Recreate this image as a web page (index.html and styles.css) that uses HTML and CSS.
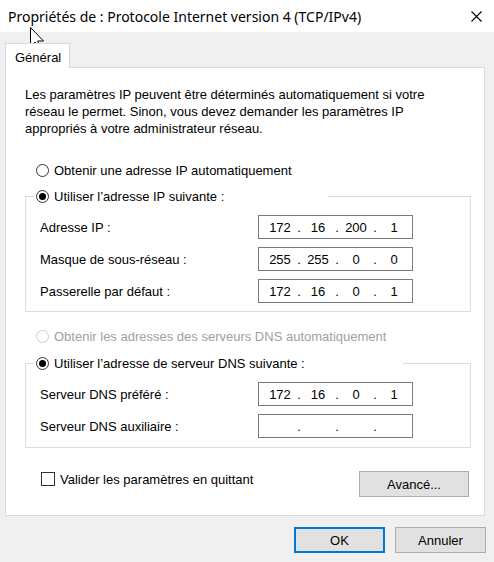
FILE: index.html
```html
<!DOCTYPE html>
<html>
<head>
    <meta charset="utf-8">
    <title>Propriétés de : Protocole Internet version 4 (TCP/IPv4)</title>
    <link rel="stylesheet" href="styles.css">
</head>
<body>
    <div class="titlebar">
        <span class="title">Propriétés de : Protocole Internet version 4 (TCP/IPv4)</span>
        <svg class="close" width="11" height="11" viewBox="0 0 11 11">
            <path d="M0.5 0.5 L10.5 10.5 M10.5 0.5 L0.5 10.5" stroke="#000" stroke-width="1.1" fill="none"/>
        </svg>
    </div>

    <div class="window">
        <div class="tabs">
            <div class="tab">Général</div>
        </div>

        <div class="panel">
            <p class="intro">
                Les paramètres IP peuvent être déterminés automatiquement si votre<br>
                réseau le permet. Sinon, vous devez demander les paramètres IP<br>
                appropriés à votre administrateur réseau.
            </p>

            <div class="option option-top">
                <span class="radio"></span>
                <span>Obtenir une adresse IP automatiquement</span>
            </div>

            <div class="group group-ip">
                <div class="legend legend-ip">
                    <span class="radio checked"></span>
                    <span>Utiliser l’adresse IP suivante :</span>
                </div>
                <div class="field first">
                    <label>Adresse IP :</label>
                    <div class="ip-box">
                        <span class="seg">172</span><span class="dot">.</span><span class="seg">16</span><span class="dot">.</span><span class="seg">200</span><span class="dot">.</span><span class="seg">1</span>
                    </div>
                </div>
                <div class="field">
                    <label>Masque de sous-réseau :</label>
                    <div class="ip-box">
                        <span class="seg">255</span><span class="dot">.</span><span class="seg">255</span><span class="dot">.</span><span class="seg">0</span><span class="dot">.</span><span class="seg">0</span>
                    </div>
                </div>
                <div class="field">
                    <label>Passerelle par défaut :</label>
                    <div class="ip-box">
                        <span class="seg">172</span><span class="dot">.</span><span class="seg">16</span><span class="dot">.</span><span class="seg">0</span><span class="dot">.</span><span class="seg">1</span>
                    </div>
                </div>
            </div>

            <div class="option option-dns disabled">
                <span class="radio"></span>
                <span>Obtenir les adresses des serveurs DNS automatiquement</span>
            </div>

            <div class="group group-dns">
                <div class="legend legend-dns">
                    <span class="radio checked"></span>
                    <span>Utiliser l’adresse de serveur DNS suivante :</span>
                </div>
                <div class="field first">
                    <label>Serveur DNS préféré :</label>
                    <div class="ip-box">
                        <span class="seg">172</span><span class="dot">.</span><span class="seg">16</span><span class="dot">.</span><span class="seg">0</span><span class="dot">.</span><span class="seg">1</span>
                    </div>
                </div>
                <div class="field">
                    <label>Serveur DNS auxiliaire :</label>
                    <div class="ip-box">
                        <span class="seg"></span><span class="dot">.</span><span class="seg"></span><span class="dot">.</span><span class="seg"></span><span class="dot">.</span><span class="seg"></span>
                    </div>
                </div>
            </div>

            <div class="bottom-row">
                <div class="check-row">
                    <span class="checkbox"></span>
                    <span>Valider les paramètres en quittant</span>
                </div>
                <button class="btn btn-advanced">Avancé...</button>
            </div>
        </div>

        <div class="footer">
            <button class="btn btn-default">OK</button>
            <button class="btn">Annuler</button>
        </div>
    </div>

    <svg class="cursor" width="15" height="24" viewBox="0 0 15 24">
        <path d="M0.5 0.5 L0.5 19.5 L5 15 L8.3 22.5 L10.8 21.4 L7.6 14 L13.5 14 Z" fill="#fff" stroke="#000" stroke-width="1"/>
    </svg>
</body>
</html>
```

FILE: styles.css
```css
body {
    margin: 0;
    width: 494px;
    height: 562px;
    background: #f0f0f0;
    font-family: "Liberation Sans", Arial, sans-serif;
    font-size: 13px;
    color: #000;
    position: relative;
    overflow: hidden;
}

.titlebar {
    height: 32px;
    background: #fff;
    display: flex;
    align-items: center;
    justify-content: space-between;
    padding: 0 12px 0 8px;
}

.title {
    font-family: "Noto Sans", "Open Sans", sans-serif;
    font-size: 14px;
    color: #000;
    margin-top: 1px;
}

.close {
    display: block;
}

.window {
    padding: 11px 0 0 5px;
}

.tabs {
    display: flex;
}

.tab {
    position: relative;
    z-index: 1;
    width: 65px;
    height: 25px;
    box-sizing: border-box;
    background: #fff;
    border: 1px solid #d9d9d9;
    border-bottom: none;
    padding: 6px 0 0 9px;
    font-size: 13px;
    margin-bottom: -1px;
}

.panel {
    width: 480px;
    box-sizing: border-box;
    background: #fff;
    border: 1px solid #d9d9d9;
    padding: 18px 0 18px 19px;
}

.intro {
    margin: 0;
    line-height: 17px;
    white-space: nowrap;
}

.option {
    display: flex;
    align-items: center;
    height: 17px;
    gap: 5px;
}

.option-top {
    margin: 25px 0 0 11px;
}

.option-dns {
    margin: 16px 0 0 11px;
}

.disabled {
    color: #a0a0a0;
}

.radio {
    width: 13px;
    height: 13px;
    box-sizing: border-box;
    border: 1px solid #333;
    border-radius: 50%;
    background: #fff;
    display: flex;
    align-items: center;
    justify-content: center;
    flex-shrink: 0;
}

.disabled .radio {
    border-color: #cccccc;
}

.radio.checked::after {
    content: "";
    width: 7px;
    height: 7px;
    border-radius: 50%;
    background: #000;
}

.group {
    width: 446px;
    box-sizing: border-box;
    border: 1px solid #dcdcdc;
}

.group-ip {
    margin-top: 17px;
    padding-bottom: 8px;
}

.group-dns {
    margin-top: 18px;
    padding-bottom: 9px;
}

.legend {
    display: flex;
    align-items: center;
    gap: 5px;
    height: 17px;
    margin: -9px 0 0 8px;
    padding-left: 2px;
    background: #fff;
}

.legend-ip {
    width: 292px;
}

.legend-dns {
    width: 367px;
}

.field {
    display: flex;
    align-items: center;
    margin-top: 8px;
    padding-left: 14px;
}

.field.first {
    margin-top: 10px;
}

.field label {
    width: 218px;
}

.ip-box {
    width: 155px;
    height: 24px;
    box-sizing: border-box;
    border: 1px solid #7a7a7a;
    display: flex;
    align-items: center;
    padding-left: 6px;
}

.seg {
    width: 30px;
    text-align: center;
}

.dot {
    width: 8px;
    text-align: center;
}

.bottom-row {
    display: flex;
    align-items: flex-start;
    justify-content: space-between;
    margin-top: 23px;
    width: 444px;
}

.check-row {
    display: flex;
    align-items: center;
    gap: 5px;
    margin: 0 0 0 16px;
    height: 16px;
}

.checkbox {
    width: 14px;
    height: 14px;
    box-sizing: border-box;
    border: 1px solid #333;
    background: #fff;
}

.btn {
    font-family: "Liberation Sans", Arial, sans-serif;
    font-size: 13px;
    color: #000;
    background: #e1e1e1;
    border: 1px solid #adadad;
    height: 26px;
    padding: 0;
}

.btn-advanced {
    width: 110px;
    height: 26px;
}

.footer {
    display: flex;
    justify-content: flex-end;
    gap: 10px;
    padding: 11px 8px 0 0;
}

.footer .btn {
    width: 91px;
}

.btn-default {
    border: 2px solid #0078d7;
}

.cursor {
    position: absolute;
    left: 30px;
    top: 27px;
}
```
